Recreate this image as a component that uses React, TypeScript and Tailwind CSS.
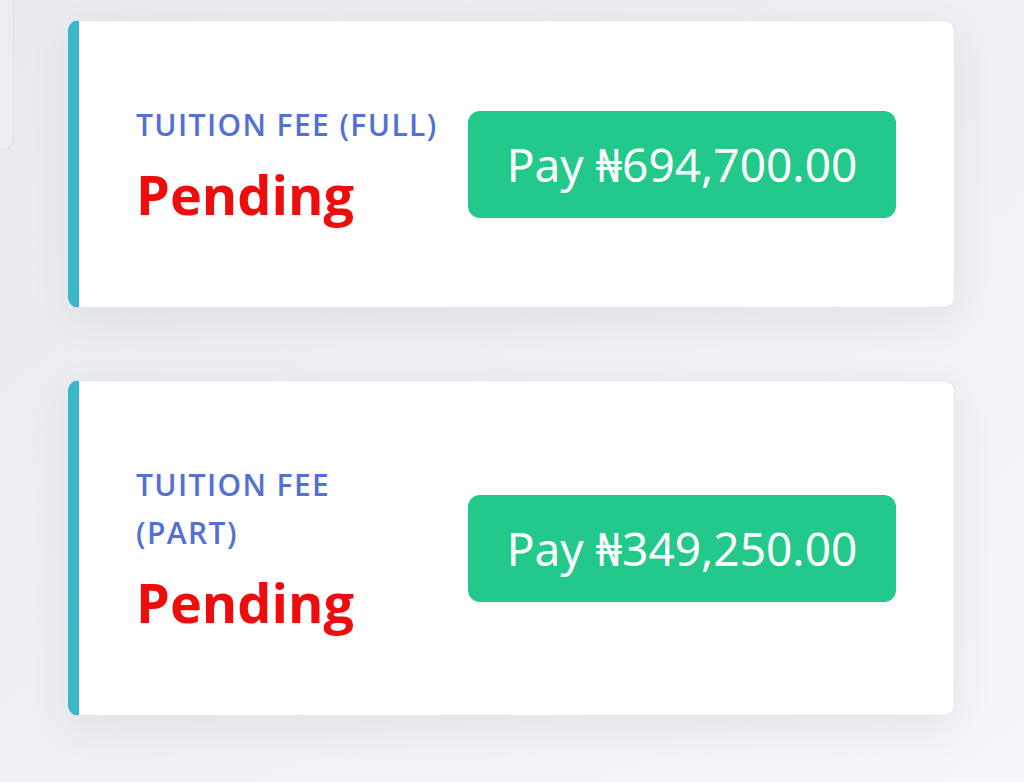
const FEES = [
  { label: "TUITION FEE (FULL)", amount: "₦694,700.00" },
  { label: "TUITION FEE (PART)", amount: "₦349,250.00" },
]

export default function App() {
  return (
    <div className="flex min-h-[782px] items-start bg-gradient-to-br from-[#e9ebef] via-[#eef0f3] to-[#f4f6f9]">
      <div className="h-[150px] w-[14px] shrink-0 rounded-br-[10px] border-r border-b border-[#dcdfe4] bg-[#eceef1]" />
      <main className="flex flex-col gap-[72px] pt-[20px] pl-[54px]">
        {FEES.map((f) => (
          <div
            key={f.label}
            className="flex w-[887px] items-center gap-[28px] rounded-[11px] border border-l-[11px] border-[#e2e5ea] border-l-[#39b8cc] bg-white py-[80px] pr-[58px] pl-[57px] shadow-[0_12px_40px_rgba(60,70,90,0.08)]"
          >
            <div className="w-[304px] shrink-0">
              <p className="font-['Open_Sans',sans-serif] text-[30px] leading-[48px] font-semibold tracking-[1.4px] text-[#5271d3]">
                {f.label}
              </p>
              <p className="mt-[13px] font-['Open_Sans',sans-serif] text-[54px] leading-[65px] font-bold text-[#ee0c0c]">
                Pending
              </p>
            </div>
            <button className="flex h-[107px] flex-1 items-center justify-center rounded-[12px] bg-[#22c98a] font-['Noto_Sans','DejaVu_Sans',sans-serif] text-[46px] text-white">
              Pay {f.amount}
            </button>
          </div>
        ))}
      </main>
    </div>
  )
}
